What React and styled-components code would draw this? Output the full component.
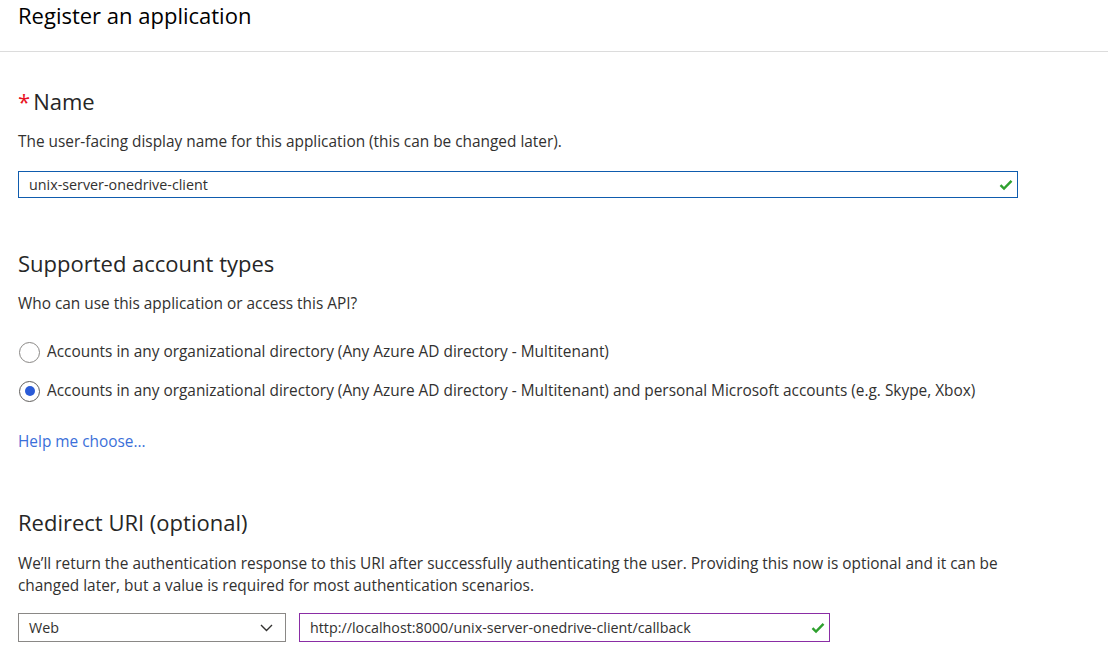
import React from "react";
import styled, { createGlobalStyle } from "styled-components";

const GlobalStyle = createGlobalStyle`
  body {
    margin: 0;
    background: #fff;
    font-family: "Segoe UI", "Open Sans", "Liberation Sans", sans-serif;
    color: #323130;
  }
`;

const Page = styled.div`
  width: 1108px;
  height: 662px;
  overflow: hidden;
  background: #fff;
`;

const Header = styled.div`
  height: 51px;
  border-bottom: 1px solid #dcdcdc;
  padding: 0 18px;
`;

const Title = styled.h1`
  margin: 0;
  font-size: 22px;
  font-weight: 400;
  line-height: 30px;
  color: #000;
`;

const Content = styled.div`
  padding: 0 18px;
`;

const SectionTitle = styled.h2`
  margin: ${(p) => p.$top}px 0 0;
  font-size: 22px;
  font-weight: 400;
  line-height: 28px;
  color: #262626;
`;

const Required = styled.span`
  color: #e81123;
  margin-right: 3px;
`;

const Text = styled.p`
  margin: ${(p) => p.$top || 17}px 0 0;
  font-size: 15.4px;
  line-height: ${(p) => p.$lh || 20}px;
  color: #323130;
  max-width: 1000px;
`;

const Field = styled.div`
  position: relative;
  box-sizing: border-box;
  width: ${(p) => p.$w}px;
  height: ${(p) => p.$h}px;
  margin-top: ${(p) => p.$top || 0}px;
  border: 1px solid ${(p) => p.$border};
  display: flex;
  align-items: center;
  padding: 0 10px;
  font-size: 14.3px;
  color: #323130;
`;

const FieldRow = styled.div`
  display: flex;
  gap: 13px;
  margin-top: 16px;
`;

const Check = styled.svg`
  position: absolute;
  right: 4px;
  top: 50%;
  margin-top: -6px;
`;

const Chevron = styled.svg`
  margin-left: auto;
  margin-right: 2px;
`;

const RadioList = styled.div`
  display: flex;
  flex-direction: column;
  gap: 17px;
  margin-top: 27px;
`;

const RadioRow = styled.label`
  display: flex;
  align-items: center;
  gap: 7px;
  font-size: 15.4px;
  line-height: 22px;
  color: #323130;
`;

const RadioCircle = styled.span`
  box-sizing: border-box;
  width: 21px;
  height: 21px;
  margin-left: 1px;
  border-radius: 50%;
  border: 1px solid ${(p) => (p.$on ? "#605e5c" : "#8a8886")};
  display: flex;
  align-items: center;
  justify-content: center;
  &::after {
    content: "";
    display: ${(p) => (p.$on ? "block" : "none")};
    width: 10px;
    height: 10px;
    border-radius: 50%;
    background: #2a5bd7;
  }
`;

const HelpLink = styled.a`
  display: block;
  margin-top: 30px;
  font-size: 15.4px;
  line-height: 20px;
  color: #3b6fd9;
  text-decoration: none;
`;

const CheckIcon = () => (
  <Check width="14" height="12" viewBox="0 0 14 12">
    <path d="M1.5 6.2 L5 9.6 L12.5 1.8" fill="none" stroke="#2ea02e" strokeWidth="2.4" />
  </Check>
);

const accountTypes = [
  { label: "Accounts in any organizational directory (Any Azure AD directory - Multitenant)", on: false },
  {
    label:
      "Accounts in any organizational directory (Any Azure AD directory - Multitenant) and personal Microsoft accounts (e.g. Skype, Xbox)",
    on: true,
  },
];

export default function App() {
  return (
    <Page>
      <GlobalStyle />
      <Header>
        <Title>Register an application</Title>
      </Header>
      <Content>
        <SectionTitle $top={35}>
          <Required>*</Required>Name
        </SectionTitle>
        <Text>The user-facing display name for this application (this can be changed later).</Text>
        <Field $w={1000} $h={27} $top={19} $border="#0f5cae">
          unix-server-onedrive-client
          <CheckIcon />
        </Field>

        <SectionTitle $top={51}>Supported account types</SectionTitle>
        <Text>Who can use this application or access this API?</Text>
        <RadioList>
          {accountTypes.map((a) => (
            <RadioRow key={a.label}>
              <RadioCircle $on={a.on} />
              {a.label}
            </RadioRow>
          ))}
        </RadioList>
        <HelpLink href="#">Help me choose...</HelpLink>

        <SectionTitle $top={56}>Redirect URI (optional)</SectionTitle>
        <Text $lh={22}>
          We’ll return the authentication response to this URI after successfully authenticating the user. Providing
          this now is optional and it can be changed later, but a value is required for most authentication scenarios.
        </Text>
        <FieldRow>
          <Field $w={268} $h={29} $border="#8a8886">
            Web
            <Chevron width="13" height="8" viewBox="0 0 13 8">
              <path d="M1 1 L6.5 6.5 L12 1" fill="none" stroke="#323130" strokeWidth="1.4" />
            </Chevron>
          </Field>
          <Field $w={531} $h={29} $border="#8a2da5">
            http://localhost:8000/unix-server-onedrive-client/callback
            <CheckIcon />
          </Field>
        </FieldRow>
      </Content>
    </Page>
  );
}
